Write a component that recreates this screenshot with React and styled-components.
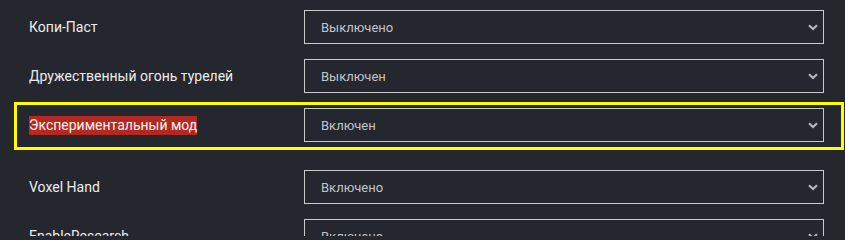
import React from 'react';
import styled, { createGlobalStyle } from 'styled-components';

const GlobalStyle = createGlobalStyle`
  html, body {
    margin: 0;
    padding: 0;
    background-color: #24272e;
  }
  body {
    font-family: Roboto, "Liberation Sans", sans-serif;
    overflow: hidden;
  }
`;

const Page = styled.div`
  width: 845px;
  height: 236px;
  padding-top: 10px;
  box-sizing: border-box;
  overflow: hidden;
  background-color: #24272e;
`;

const Row = styled.div`
  display: flex;
  align-items: center;
  padding-left: 29px;
  margin-bottom: 15px;
`;

const Highlight = styled.div`
  display: flex;
  align-items: center;
  box-sizing: border-box;
  width: 830px;
  margin: -6px 0 20px 14px;
  padding: 3px 0 5px 12px;
  border: 3px solid #ffff00;
`;

const Label = styled.div`
  flex: 0 0 275px;
  font-size: 14px;
  color: #ececec;
`;

const Marked = styled.span`
  display: inline-block;
  line-height: 19px;
  background-color: #b5281f;
  color: #f4f4f4;
`;

const Select = styled.div`
  display: flex;
  align-items: center;
  justify-content: space-between;
  box-sizing: border-box;
  width: 520px;
  height: 34px;
  padding: 0 5px 0 16px;
  border: 1px solid #c9c9c9;
  font-size: 13px;
  color: #c3c6cc;
`;

const Chevron = () => (
  <svg width="10" height="7" viewBox="0 0 10 7">
    <polyline points="1,1.2 5,5 9,1.2" fill="none" stroke="#b4b6ba" strokeWidth="2.2" />
  </svg>
);

const rows = [
  { label: 'Копи-Паст', value: 'Выключено' },
  { label: 'Дружественный огонь турелей', value: 'Выключен' },
  { label: 'Экспериментальный мод', value: 'Включен', marked: true },
  { label: 'Voxel Hand', value: 'Включено' },
  { label: 'EnableResearch', value: 'Включено' },
];

const Field = ({ value }) => (
  <Select>
    <span>{value}</span>
    <Chevron />
  </Select>
);

const App = () => (
  <Page>
    <GlobalStyle />
    {rows.map((r) =>
      r.marked ? (
        <Highlight key={r.label}>
          <Label>
            <Marked>{r.label}</Marked>
          </Label>
          <Field value={r.value} />
        </Highlight>
      ) : (
        <Row key={r.label}>
          <Label>{r.label}</Label>
          <Field value={r.value} />
        </Row>
      )
    )}
  </Page>
);

export default App;
